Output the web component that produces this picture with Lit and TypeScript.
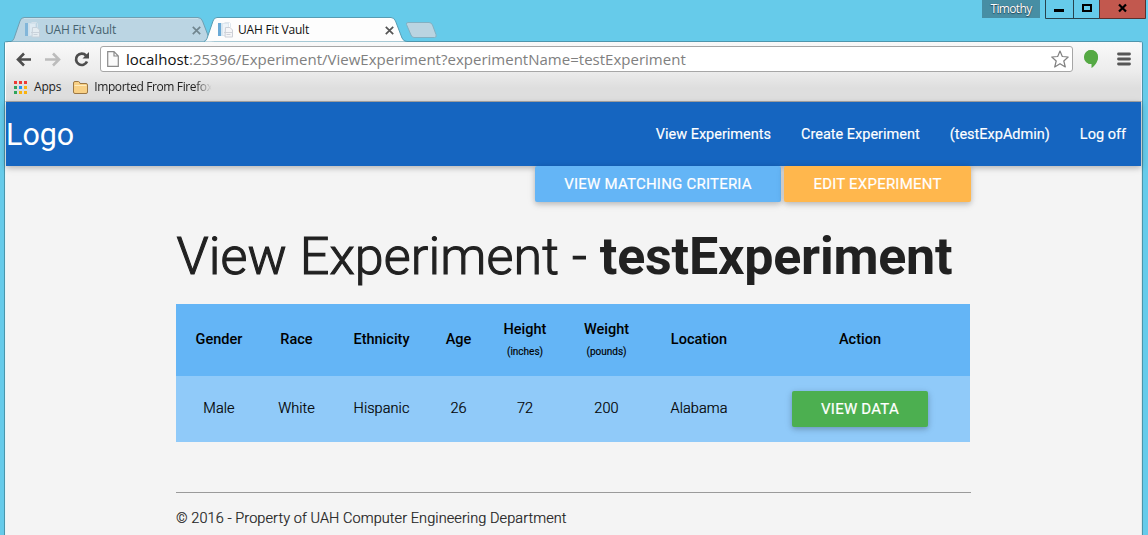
import { LitElement, html, css, svg } from "lit";
import { customElement, property } from "lit/decorators.js";

const pageIcon = svg`
  <rect x="0" y="1" width="3" height="13" fill="#6aa9d6"/>
  <rect x="3" y="1" width="1" height="13" fill="#d5e6f1"/>
  <rect x="4.5" y="1.5" width="6" height="12" fill="#eef4f9" stroke="#dde7ef"/>
  <path d="M6.500 .500h5l1 1v4" fill="none" stroke="#dfe6ed"/>
  <path d="M7.500 5.500h4.500l2.500 2.500v7h-7.500z" fill="#f6f6f8" stroke="#cdd0d7"/>
  <path d="M6 10.500h8M8.500 12.500h4" stroke="#cfd2d8"/>`;

@customElement("browser-tab")
class BrowserTab extends LitElement {
  @property({ type: Boolean, reflect: true }) active = false;
  @property() label = "";

  static styles = css`
    :host { display: block; position: relative; width: 202px; height: 25px; flex: none; }
    .shape { position: absolute; left: 0; top: 0; }
    .content { position: relative; display: flex; align-items: center; height: 26px; padding: 0 12px 0 14px; box-sizing: border-box; }
    .icon { flex: none; opacity: 0.7; }
    .label { flex: 1; margin-left: 4px; font: 12px/16px "Open Sans", sans-serif; letter-spacing: -0.18px; color: #45626f; white-space: nowrap; }
    .close { flex: none; stroke: #71868f; }
    :host([active]) .icon { opacity: 1; }
    :host([active]) .label { color: #111; }
    :host([active]) .close { stroke: #555; }
  `;

  render() {
    return html`
      <svg class="shape" width="206" height="25" viewBox="0 0 206 25">
        <path d="M0 24.5 Q2 24 3 21.500 L9 4 Q10 .5 13 .5 H187 Q190 .5 191.500 4 L198 21 Q199.500 24.500 203 24.500"
          fill=${this.active ? "#fdfdfd" : "#bbd5e3"} stroke=${this.active ? "#579db4" : "#6f9fb2"}/>
        <path d="M13 1.500H187" stroke=${this.active ? "#fff" : "#cbe0ea"}/>
      </svg>
      <div class="content">
        <svg class="icon" width="16" height="16" viewBox="0 0 16 16" fill="none">${pageIcon}</svg>
        <span class="label">${this.label}</span>
        <svg class="close" width="9" height="9" viewBox="0 0 9 9" fill="none" stroke-width="1.700"><path d="M.8 .8l7.400 7.400M8.200 .8L.8 8.200"/></svg>
      </div>`;
  }
}

@customElement("browser-chrome")
class BrowserChrome extends LitElement {
  static styles = css`
    :host { display: block; font-family: "Open Sans", sans-serif; }
    .strip { display: flex; height: 41px; box-sizing: border-box; align-items: flex-start; justify-content: space-between; }
    .tabs { display: flex; padding: 17px 0 0 11px; height: 24px; }
    .tabs browser-tab + browser-tab { margin-left: -9px; z-index: 1; }
    .plus { margin: 5px 0 0 -2px; }
    .controls { display: flex; align-items: flex-start; padding-right: 2px; }
    .user { width: 58px; height: 18px; margin-right: 5px; background: #478ea4; color: #fff; font: 12px/17px "Open Sans", sans-serif; letter-spacing: -0.65px; text-align: center; text-shadow: 0 1px 1px #24495a, 0 0 1px #24495a; }
    .bar { height: 61px; margin: 0 6px 0 5px; border: 1px solid #8f989c; border-top-color: #4f95ac; box-sizing: border-box; border-radius: 3px 3px 0 0; border-left: 1px solid #fff; border-right: 1px solid #eef; border-bottom-color: #a7a7a7; background: linear-gradient(#f9f9f9, #ececec 50%, #dedede 78%, #dedede); box-shadow: -1px 0 #4b95aa, 1px 0 #4b95aa; }
    .row { display: flex; align-items: center; height: 26px; padding: 4px 10px 0 10px; }
    .nav { flex: none; margin-left: -1px; }
    .address { display: flex; align-items: center; flex: 1; height: 26px; box-sizing: border-box; border: 1px solid #a6a6a6; border-radius: 3px; background: #fff; margin-left: 11px; padding: 0 3px 0 6px; font-size: 15px; line-height: 22px; color: #808080; }
    .url { flex: 1; margin-left: 7px; white-space: nowrap; letter-spacing: 0.01px; }
    .host { color: #111; }
    .balloon { margin-left: 11px; }
    .menu { margin-left: 18px; }
    .bookmarks { display: flex; align-items: center; height: 20px; padding: 5px 0 0 8px; font-size: 12px; line-height: 18px; color: #222; letter-spacing: -0.2px; }
    .apps { margin: 0 12px 0 7px; }
    .folder-label { margin-left: 6px; width: 120px; white-space: nowrap; letter-spacing: -0.38px; mask-image: linear-gradient(90deg, #000 84%, transparent 98%); }
  `;

  render() {
    const dots = ["#ec3b35", "#ec3b35", "#ec3b35", "#2fa45c", "#2196f3", "#f9b311", "#2fa45c", "#f9b311", "#f9b311"];
    return html`
      <div class="strip">
        <div class="tabs">
          <browser-tab label="UAH Fit Vault"></browser-tab>
          <browser-tab label="UAH Fit Vault" active></browser-tab>
          <svg class="plus" width="34" height="17" viewBox="0 0 34 17"><path d="M4 .5H25Q27.500 .5 28.500 3L32 12.500Q33 15.500 30.500 15.500H10Q8 15.500 7 13L2.500 2.500Q2 .5 4 .5z" fill="#bad4e1" stroke="#82b0c2"/></svg>
        </div>
        <div class="controls">
          <div class="user">Timothy</div>
          <svg width="101" height="19" viewBox="0 0 101 19">
            <path d="M.5 0V18.500H54.500V0M28.500 0V18.500" fill="none" stroke="#28434d"/>
            <path d="M54.500 -1H100.500V18.500H54.500z" fill="#c2584e" stroke="#5c302d"/>
            <rect x="9" y="9" width="10" height="3"/>
            <rect x="38" y="5" width="8" height="6" fill="none" stroke="#000" stroke-width="2"/>
            <path d="M74 4.500L81 11.500M81 4.500L74 11.500" stroke="#000" stroke-width="2.200"/>
          </svg>
        </div>
      </div>
      <div class="bar">
        <div class="row">
          <svg class="nav" width="74" height="18" viewBox="0 0 74 18" fill="none">
            <path d="M16 9.500H3M9 3.500L3 9.500L9 15.500" stroke="#4d4d4d" stroke-width="2.600"/>
            <path d="M30 9.500H43M38 3.500L44 9.500L38 15.500" stroke="#bcbcbc" stroke-width="2.600"/>
            <path d="M71 5.500A5.700 5.700 0 1 0 72 11.500" stroke="#4d4d4d" stroke-width="2.700"/>
            <path d="M74 2V8.500H67.500z" fill="#4d4d4d"/>
          </svg>
          <div class="address">
            <svg width="12" height="16" viewBox="0 0 12 16"><path d="M.7 .7H7L11.300 5V15.300H.7zM7 .7V5H11.300" fill="#fafafa" stroke="#8a8a8a" stroke-width="1.200"/></svg>
            <span class="url"><span class="host">localhost</span>:25396/Experiment/ViewExperiment?experimentName=testExperiment</span>
            <svg width="18" height="18" viewBox="0 0 18 18"><path d="M9 1L11.300 6.500L17.200 7L12.800 11L14.300 17L9 13.700L3.700 17L5.200 11L.8 7L6.700 6.500z" fill="#fff" stroke="#808080" stroke-width="1.200" stroke-linejoin="round"/></svg>
          </div>
          <svg class="balloon" width="15" height="18" viewBox="0 0 15 18"><path d="M7 0A7 6.900 0 0 1 14 7C14 12 10.500 16 7.500 18V14A7 7 0 0 1 7 0z" fill="#55a944"/><circle cx="7" cy="7" r="7" fill="#55a944"/></svg>
          <svg class="menu" width="14" height="14" viewBox="0 0 14 14"><path d="M1.500 2H12.500M1.500 7H12.500M1.500 12H12.500" stroke="#555" stroke-width="2.800" stroke-linecap="round"/></svg>
        </div>
        <div class="bookmarks">
          <svg width="13" height="13" viewBox="0 0 13 13">${dots.map((c, i) => svg`<rect x=${(i % 3) * 5} y=${Math.floor(i / 3) * 5} width="3" height="3" fill=${c}/>`)}</svg>
          <span class="apps">Apps</span>
          <svg width="15" height="13" viewBox="0 0 15 13"><path d="M.5 11V2Q.5 .5 2 .5H5.500Q6.500 .5 7 2.500H13Q14.500 2.500 14.500 4V11Q14.500 12.500 13 12.500H2Q.5 12.500 .5 11z" fill="#f8d085" stroke="#9c7845"/><path d="M1.500 4.500H13.500" stroke="#fdebbf"/></svg>
          <span class="folder-label">Imported From Firefox</span>
        </div>
      </div>`;
  }
}

@customElement("app-root")
class AppRoot extends LitElement {
  static styles = css`
    :host { display: block; width: 1148px; height: 535px; overflow: hidden; background: #66cbea; font-family: Roboto, sans-serif; font-size: 14.5px; }
    .page { height: 433px; margin: 0 6px 0 5px; border-left: 1px solid #e8f6fa; border-right: 1px solid #e0e8ea; box-shadow: -1px 0 #4b95aa, 1px 0 #4b95aa; background: #f4f4f4; color: #212121; }
    nav { display: flex; align-items: center; justify-content: space-between; height: 64px; background: #1565c0; color: #fff; box-shadow: 0 2px 5px rgba(0,0,0,.16), 0 2px 8px rgba(0,0,0,.12); }
    .logo { font-size: 30.450px; }
    .links { display: flex; gap: 30px; padding-right: 15px; font-size: 14.500px; -webkit-text-stroke: .15px; }
    main { width: 794px; margin-left: 170px; }
    .actions { display: flex; justify-content: flex-end; gap: 3px; margin-right: -1px; position: relative; }
    .btn { display: block; box-sizing: border-box; height: 36px; border-radius: 2px; color: #fff; font-size: 15px; line-height: 37px; text-align: center; white-space: nowrap; box-shadow: 0 2px 5px rgba(0,0,0,.16), 0 2px 8px rgba(0,0,0,.12); letter-spacing: .22px; font-weight: 400; -webkit-text-stroke: .2px; }
    .criteria { width: 246px; background: #64b5f6; }
    .edit { width: 187px; background: #ffb74d; }
    .data { width: 136px; background: #4caf50; }
    h1 { margin: 27px 0 19px; font-size: 52px; line-height: 56px; font-weight: 300; white-space: nowrap; }
    .light { letter-spacing: .13px; margin-left: .5px; -webkit-text-stroke: 1.1px; }
    .name { font-weight: 700; letter-spacing: -.22px; }
    .grid { display: grid; grid-template-columns: 86px 69px 101px 53px 80px 83px 102px 220px; justify-items: center; align-items: center; color: #000; }
    .head { height: 72px; padding-bottom: 1px; box-sizing: border-box; background: #64b5f6; font-weight: 500; text-align: center; line-height: 22px; }
    .paired { padding-top: 3px; }
    .unit { display: block; font-size: 10px; line-height: 22px; font-weight: 400; -webkit-text-stroke: .15px; }
    .body { height: 66px; background: #90caf9; font-weight: 300; }
    .cell { padding-bottom: 2px; -webkit-text-stroke: .2px; letter-spacing: .06px; }
    .rule { height: 1px; background: #9a9a9a; margin: 50px -1px 0 0; }
    footer { margin-top: 15px; line-height: 22px; font-weight: 300; white-space: nowrap; -webkit-text-stroke: .2px; letter-spacing: .085px; }
  `;

  render() {
    const columns = [["Gender"], ["Race"], ["Ethnicity"], ["Age"], ["Height", "(inches)"], ["Weight", "(pounds)"], ["Location"], ["Action"]];
    const values = ["Male", "White", "Hispanic", "26", "72", "200", "Alabama"];
    return html`
      <browser-chrome></browser-chrome>
      <div class="page">
        <nav>
          <span class="logo">Logo</span>
          <div class="links"><span>View Experiments</span><span>Create Experiment</span><span>(testExpAdmin)</span><span>Log off</span></div>
        </nav>
        <main>
          <div class="actions"><span class="btn criteria">VIEW MATCHING CRITERIA</span><span class="btn edit">EDIT EXPERIMENT</span></div>
          <h1><span class="light">View Experiment - </span><span class="name">testExperiment</span></h1>
          <div class="grid head">${columns.map(([t, u]) => html`<div class=${u ? "paired" : ""}>${t}${u ? html`<span class="unit">${u}</span>` : ""}</div>`)}</div>
          <div class="grid body">${values.map((v) => html`<div class="cell">${v}</div>`)}<span class="btn data">VIEW DATA</span></div>
          <div class="rule"></div>
          <footer>© 2016 - Property of UAH Computer Engineering Department</footer>
        </main>
      </div>`;
  }
}
